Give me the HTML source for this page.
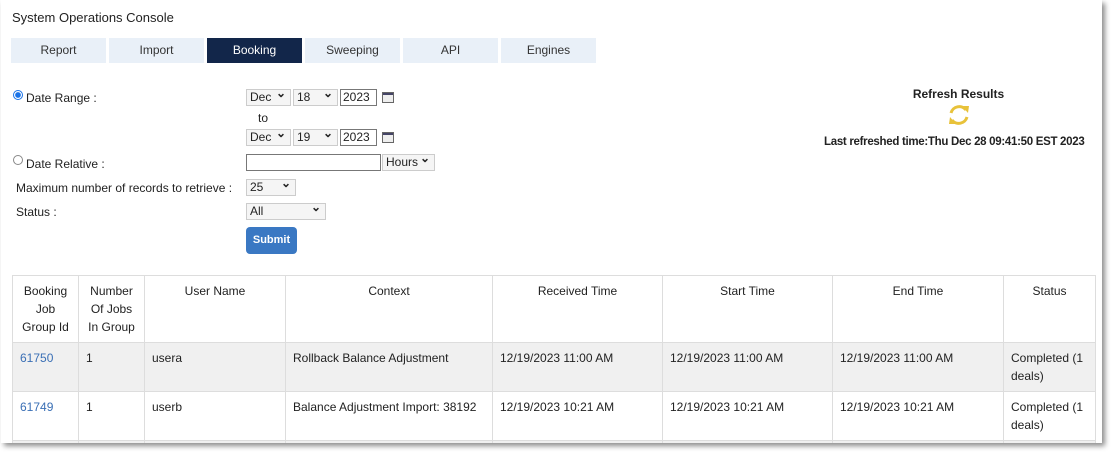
<!DOCTYPE html>
<html><head><meta charset="utf-8"><style>
body{margin:0;width:1111px;height:456px;background:#fff;overflow:hidden;font-family:"Liberation Sans",sans-serif;font-size:12px;color:#222;position:relative}
.frame{position:absolute;left:1px;top:0;width:1101px;height:443px;background:#fff;box-shadow:3px 3px 5px rgba(0,0,0,.45);overflow:hidden}
.abs{position:absolute}
.title{left:11px;top:10px;font-size:13px;color:#222}
.tab{position:absolute;top:38px;height:25px;width:95px;background:#e9f0f8;text-align:center;line-height:25px;font-size:12px;color:#333}
.tab.on{background:#12264a;color:#fff}
.sel{position:absolute;height:17px;border:1px solid #ccc;background:#f5f5f5;box-sizing:border-box;font-size:12px;line-height:15px;padding-left:3px}
.sel:after{content:"⌄";position:absolute;right:4px;top:-4px;font-size:12px;font-weight:bold}
.inp{position:absolute;height:17px;border:1px solid #777;box-sizing:border-box;background:#fff;font-size:12px;line-height:15px;padding-left:2px}
.cal{position:absolute;width:12px;height:11px;border:1px solid #666;background:#eee;box-sizing:border-box}
.cal:before{content:"";position:absolute;left:0;top:0;right:0;height:2px;background:#446}
.lbl{position:absolute;font-size:12px}
.radio{position:absolute;width:10px;height:10px;border-radius:50%;border:1px solid #888;box-sizing:border-box;background:#fff}
.radio.on{border-color:#1a73e8;background:radial-gradient(circle,#1a73e8 45%,#fff 55%)}
table{position:absolute;left:11px;top:275px;border-collapse:collapse;width:1083px;table-layout:fixed}
td,th{border:1px solid #ddd;vertical-align:top;padding:6px 7px;font-size:12px;line-height:18px}
th{font-weight:normal;text-align:center;color:#222;height:54px}
tr.g td{background:#f0f0f0}
td{height:36px}
a{color:#3a6fb5;text-decoration:none}
</style></head><body>
<div class="frame">
<div class="abs title">System Operations Console</div>
<div class="tab" style="left:10px">Report</div>
<div class="tab" style="left:108px">Import</div>
<div class="tab on" style="left:206px">Booking</div>
<div class="tab" style="left:304px">Sweeping</div>
<div class="tab" style="left:402px">API</div>
<div class="tab" style="left:500px">Engines</div>

<div class="radio on" style="left:12px;top:90px"></div>
<div class="lbl" style="left:25px;top:91px">Date Range :</div>
<div class="sel" style="left:245px;top:89px;width:45px">Dec</div>
<div class="sel" style="left:292px;top:89px;width:45px">18</div>
<div class="inp" style="left:339px;top:89px;width:37px">2023</div>
<div class="cal" style="left:381px;top:92px"></div>
<div class="lbl" style="left:257px;top:111px">to</div>
<div class="sel" style="left:245px;top:129px;width:45px">Dec</div>
<div class="sel" style="left:292px;top:129px;width:45px">19</div>
<div class="inp" style="left:339px;top:129px;width:37px">2023</div>
<div class="cal" style="left:381px;top:132px"></div>

<div class="radio" style="left:12px;top:155px"></div>
<div class="lbl" style="left:25px;top:157px">Date Relative :</div>
<div class="inp" style="left:245px;top:154px;width:135px"></div>
<div class="sel" style="left:381px;top:154px;width:53px">Hours</div>
<div class="lbl" style="left:15px;top:181px">Maximum number of records to retrieve :</div>
<div class="sel" style="left:245px;top:179px;width:50px">25</div>
<div class="lbl" style="left:15px;top:205px">Status :</div>
<div class="sel" style="left:245px;top:203px;width:80px">All</div>
<div class="abs" style="left:245px;top:227px;width:51px;height:27px;background:#3a78c3;border-radius:4px;color:#fff;text-align:center;line-height:26px;font-size:11px;font-weight:bold">Submit</div>

<div class="abs" style="left:870px;top:87px;width:175px;text-align:center;font-weight:bold;color:#222">Refresh Results</div>
<svg class="abs" style="left:945px;top:102px" width="26" height="26" viewBox="0 0 26 26"><path d="M5 11 A8.5 8.5 0 0 1 20 8" fill="none" stroke="#e8c23a" stroke-width="3"/><path d="M16 4 L23 4 L22 11 Z" fill="#e8c23a"/><path d="M21 15 A8.5 8.5 0 0 1 6 18" fill="none" stroke="#e8c23a" stroke-width="3"/><path d="M10 22 L3 22 L4 15 Z" fill="#e8c23a"/></svg>
<div class="abs" style="left:823px;top:136px;font-weight:bold;color:#222;white-space:nowrap;font-size:11.5px;letter-spacing:-0.3px">Last refreshed time:Thu Dec 28 09:41:50 EST 2023</div>

<table>
<colgroup><col style="width:66px"><col style="width:66px"><col style="width:141px"><col style="width:207px"><col style="width:170px"><col style="width:170px"><col style="width:171px"><col style="width:92px"></colgroup>
<tr><th>Booking Job Group Id</th><th>Number Of Jobs In Group</th><th>User Name</th><th>Context</th><th>Received Time</th><th>Start Time</th><th>End Time</th><th>Status</th></tr>
<tr class="g"><td><a>61750</a></td><td>1</td><td>usera</td><td>Rollback Balance Adjustment</td><td>12/19/2023 11:00 AM</td><td>12/19/2023 11:00 AM</td><td>12/19/2023 11:00 AM</td><td>Completed (1 deals)</td></tr>
<tr><td><a>61749</a></td><td>1</td><td>userb</td><td>Balance Adjustment Import: 38192</td><td>12/19/2023 10:21 AM</td><td>12/19/2023 10:21 AM</td><td>12/19/2023 10:21 AM</td><td>Completed (1 deals)</td></tr>
<tr class="g"><td>&nbsp;</td><td></td><td></td><td></td><td></td><td></td><td></td><td></td></tr>
</table>
</div>
</body></html>
